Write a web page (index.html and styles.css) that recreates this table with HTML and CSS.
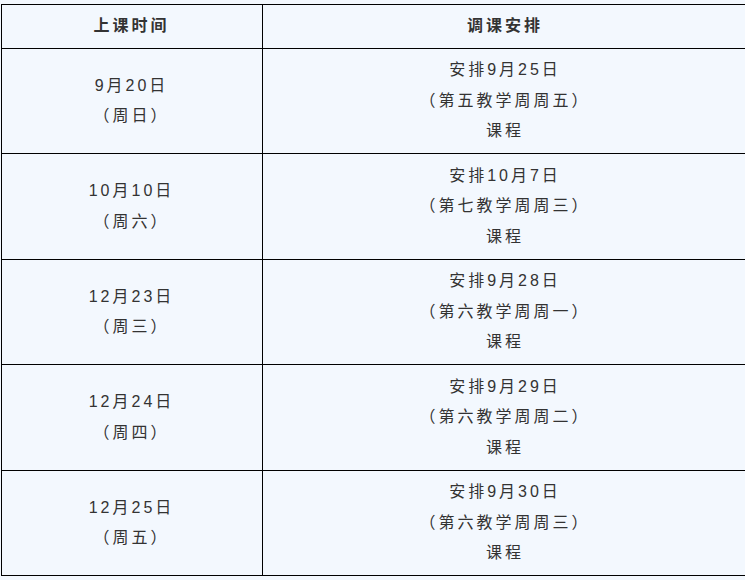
FILE: index.html
```html
<!DOCTYPE html>
<html lang="zh">
<head>
<meta charset="utf-8">
<link rel="stylesheet" href="styles.css">
</head>
<body>
<div class="wrap">
<table class="sched">
  <thead>
    <tr><th class="c1">上课时间</th><th class="c2">调课安排</th></tr>
  </thead>
  <tbody>
    <tr><td class="left">9月20日<br>（周日）</td><td>安排9月25日<br>（第五教学周周五）<br>课程</td></tr>
    <tr><td class="left">10月10日<br>（周六）</td><td>安排10月7日<br>（第七教学周周三）<br>课程</td></tr>
    <tr><td class="left">12月23日<br>（周三）</td><td>安排9月28日<br>（第六教学周周一）<br>课程</td></tr>
    <tr><td class="left">12月24日<br>（周四）</td><td>安排9月29日<br>（第六教学周周二）<br>课程</td></tr>
    <tr><td class="left">12月25日<br>（周五）</td><td>安排9月30日<br>（第六教学周周三）<br>课程</td></tr>
  </tbody>
</table>
</div>
</body>
</html>
```
FILE: styles.css
```css
html, body {
  margin: 0;
  padding: 0;
  background: #f3f8fe;
  overflow: hidden;
}
.wrap {
  padding: 3.5px 0 0 0.5px;
  width: 760px;
}
.sched {
  border-collapse: collapse;
  width: 748px;
  table-layout: fixed;
  font-family: "Liberation Sans", "Noto Sans CJK SC", sans-serif;
  font-size: 16px;
  color: #333;
  letter-spacing: 3px;
}
.sched th, .sched td {
  border: 1px solid #000;
  text-align: center;
  vertical-align: middle;
}
.sched th {
  font-weight: bold;
  line-height: 30px;
  padding: 6.5px 4px;
  color: #333;
}
.sched td {
  line-height: 30.5px;
  padding: 6.5px 4px;
}
.sched td.left {
  padding-top: 7px;
  padding-bottom: 6px;
}
.c1 { width: 252px; }
```
